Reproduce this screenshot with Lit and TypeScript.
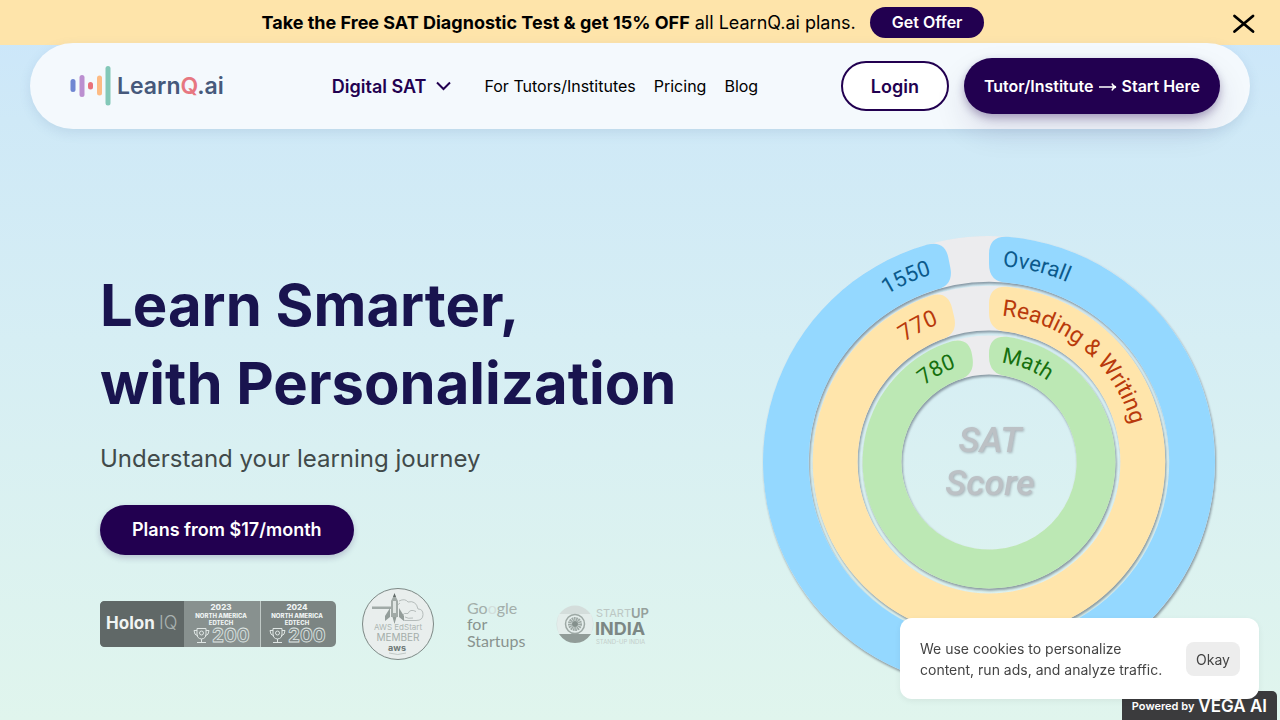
import { LitElement, html, css, svg } from "lit";
import { customElement } from "lit/decorators.js";

const CENTER = 230;

interface Ring {
  outer: number;
  inner: number;
  max: number;
  score: number;
  label: string;
  size: number;
  fill: string;
  ink: string;
  labelAt: number;
  scoreAt: number;
}

const RINGS: Ring[] = [
  { outer: 227, inner: 181, max: 1600, score: 1550, label: "Overall", size: 22, fill: "#94d8ff", ink: "#0b5a8c", labelAt: 4, scoreAt: -17 },
  { outer: 177, inner: 132, max: 800, score: 770, label: "Reading & Writing", size: 23, fill: "#ffe5ab", ink: "#b93a0b", labelAt: 5, scoreAt: -20 },
  { outer: 127, inner: 88, max: 800, score: 780, label: "Math", size: 22, fill: "#bce8b4", ink: "#16700f", labelAt: 7, scoreAt: -19 },
];

function point(radius: number, degrees: number): string {
  const a = (degrees * Math.PI) / 180;
  return `${(CENTER + radius * Math.sin(a)).toFixed(2)} ${(CENTER - radius * Math.cos(a)).toFixed(2)}`;
}

/** Ring segment from 0 degrees to `end`, clockwise, with rounded corners. */
function segment(outer: number, inner: number, end: number, corner = 18): string {
  const o = (corner / outer) * (180 / Math.PI);
  const i = (corner / inner) * (180 / Math.PI);
  return [
    `M${point(outer, o)}`,
    `A${outer} ${outer} 0 1 1 ${point(outer, end - o)}`,
    `Q${point(outer, end)} ${point(outer - corner, end)}`,
    `L${point(inner + corner, end)}`,
    `Q${point(inner, end)} ${point(inner, end - i)}`,
    `A${inner} ${inner} 0 1 0 ${point(inner, i)}`,
    `Q${point(inner, 0)} ${point(inner + corner, 0)}`,
    `L${point(outer - corner, 0)}`,
    `Q${point(outer, 0)} ${point(outer, o)}Z`,
  ].join("");
}

@customElement("score-rings")
export class ScoreRings extends LitElement {
  static styles = css`
    :host { display: block; }
    svg { display: block; width: 100%; height: auto; overflow: visible; }
    .shape { filter: drop-shadow(1px 2px 1px rgba(60, 70, 85, 0.5)); }
    .label { font-family: Roboto, sans-serif; }
    .center {
      font: italic 500 36px Roboto, sans-serif;
      fill: #bcc1c5;
      text-anchor: middle;
      filter: drop-shadow(1px 1px 1px rgba(120, 120, 130, 0.5));
    }
  `;

  render() {
    return html`
      <svg viewBox="3 3 454 454" role="img" aria-label="SAT score rings">
        <g class="shape">
          ${RINGS.map((r) => {
            const mid = (r.outer + r.inner) / 2;
            return svg`
              <circle cx=${CENTER} cy=${CENTER} r=${mid} fill="none" stroke="#ececee" stroke-width=${r.outer - r.inner}></circle>
              <path d=${segment(r.outer, r.inner, (r.score / r.max) * 360)} fill=${r.fill}></path>`;
          })}
        </g>
        ${RINGS.map((r, n) => {
          const base = (r.outer + r.inner) / 2 - 7;
          return svg`
            <path id="label-${n}" fill="none" d="M${point(base, r.labelAt)}A${base} ${base} 0 0 1 ${point(base, 170)}"></path>
            <path id="score-${n}" fill="none" d="M${point(base, -170)}A${base} ${base} 0 0 1 ${point(base, r.scoreAt)}"></path>
            <text class="label" font-size=${r.size} fill=${r.ink}><textPath href="#label-${n}">${r.label}</textPath></text>
            <text class="label" font-size=${r.size} fill=${r.ink} text-anchor="end"><textPath href="#score-${n}" startOffset="100%">${r.score}</textPath></text>`;
        })}
        <text class="center" x="231" y="220">SAT</text>
        <text class="center" x="231" y="263">Score</text>
      </svg>
    `;
  }
}

@customElement("award-logos")
export class AwardLogos extends LitElement {
  static styles = css`
    :host { display: flex; align-items: center; }
    svg { display: block; flex: none; }
    .aws { margin-left: 26px; }
    .google { margin-left: 32px; }
    .india { margin-left: 30px; }
    text { font-family: Inter, sans-serif; }
    .mid { text-anchor: middle; }
    .open { fill: none; stroke: #dfe6e4; stroke-width: 0.8; font-weight: 700; font-size: 19px; }
    .tiny { font-size: 6px; font-weight: 800; fill: #eff4f3; }
    .year { font-size: 8px; font-weight: 800; fill: #eff4f3; }
    .round { font-family: Lato, sans-serif; }
    .narrow { font-family: "Open Sans", sans-serif; }
  `;

  private award(x: number, year: string) {
    return svg`
      <g transform="translate(${x} 0)">
        <text class="year mid" x="37" y="9">${year}</text>
        <text class="tiny mid" x="37" y="17">NORTH AMERICA</text>
        <text class="tiny mid" x="37" y="24">EDTECH</text>
        <g fill="none" stroke="#dfe6e4" stroke-width="1">
          <path d="M13 27.500h9v5.500q0 4.500-4.500 5q-4.500-.5-4.500-5zM13 29.500h-3q0 4.500 4 5.500M22 29.500h3q0 4.500-4 5.500M17.500 38v3M13 41.500h9"></path>
          <circle cx="17.500" cy="32" r="2"></circle>
        </g>
        <text class="open" x="28" y="41">200</text>
      </g>`;
  }

  render() {
    return html`
      <svg width="236" height="46" viewBox="0 0 236 46" role="img" aria-label="Holon IQ North America EdTech 200">
        <rect width="236" height="46" rx="5" fill="#7c8583"></rect>
        <path d="M5 0H84V46H5Q0 46 0 41V5Q0 0 5 0Z" fill="#606867"></path>
        <rect x="84" width="76" height="46" fill="#88918f"></rect>
        <path d="M160.500 0V46" stroke="#c0c9c6"></path>
        <text x="6" y="28" font-size="17" font-weight="700" fill="#f0f4f3">Holon</text>
        <text x="59" y="28" font-size="18" font-weight="300" fill="#a9b1af">IQ</text>
        ${this.award(84, "2023")} ${this.award(160, "2024")}
      </svg>

      <svg class="aws" width="72" height="72" viewBox="0 0 72 72" role="img" aria-label="AWS EdStart Member">
        <circle cx="36" cy="36" r="35.500" fill="#e9eeed" stroke="#7d8885"></circle>
        <g fill="none" stroke="#a7afad" stroke-width="0.800">
          <path d="M37 13q6-3 9 1q8-2 10 7q5 0 5 5.500q0 6-7 6H43q-4-1-3-5q2-3 6-2q2-5 8-2"></path>
          <path d="M38 15q-4 2-4 6M43 29q3 2 8 1"></path>
        </g>
        <path d="M10 18.500H29V21H10zM29 13l3.500-7l3.500 7V29H29z" fill="#a1aaa7"></path>
        <path d="M31 13h3v12h-3z" fill="#dfe5e3"></path>
        <path d="M28 20l-5 8v5l5-4zM37 20l5 8v5l-5-4zM30.500 29h4l-2 7z" fill="#939d9a"></path>
        <path d="M31 9l1.500-4l1.500 4z" fill="#626b69"></path>
        <text class="mid" x="36" y="42" font-size="8" fill="#adb6b3">AWS EdStart</text>
        <text class="mid" x="36" y="53" font-size="10" fill="#a4adaa">MEMBER</text>
        <text class="mid" x="35" y="63" font-size="9" font-weight="700" fill="#6f7977">aws</text>
        <path d="M27 65q9 3 17 0" fill="none" stroke="#b5bdba" stroke-width="0.800"></path>
      </svg>

      <svg class="google" width="60" height="56" viewBox="0 0 60 56" role="img" aria-label="Google for Startups">
        <text class="round" x="1" y="18" font-size="16" fill="#a3aeaa">Go<tspan fill="#d3dedb">o</tspan>gle</text>
        <text class="round" x="1" y="34" font-size="16" fill="#89938f">for</text>
        <text class="round" x="1" y="51" font-size="16" fill="#89938f">Startups</text>
      </svg>

      <svg class="india" width="94" height="44" viewBox="0 0 94 44" role="img" aria-label="Startup India">
        <circle cx="19" cy="22" r="18.500" fill="#d4dddb"></circle>
        <path d="M3 12H35Q39 22 35 32H3Q-1 22 3 12Z" fill="#e4edeb"></path>
        <path d="M3 32H35Q29 41 19 41T3 32Z" fill="#919c98"></path>
        <g fill="none" stroke="#9da8a4">
          <circle cx="19" cy="22" r="9.500" stroke-width="1.500"></circle>
          <circle cx="19" cy="22" r="5" stroke-width="4" stroke-dasharray="1.500 0.500"></circle>
        </g>
        <circle cx="19" cy="22" r="3" fill="#84908c"></circle>
        <text x="40" y="15" font-size="11" fill="#bcc7c4">START</text>
        <text x="75" y="16" font-size="13" font-weight="600" fill="#95a09c">UP</text>
        <text x="39" y="33" font-size="18" font-weight="700" fill="#7c8784">INDIA</text>
        <text x="40" y="42" font-size="6" fill="#c3ceca">STAND-UP INDIA</text>
      </svg>
    `;
  }
}

@customElement("app-root")
export class AppRoot extends LitElement {
  static styles = css`
    :host {
      display: block;
      min-height: 100vh;
      overflow: hidden;
      box-sizing: border-box;
      background: linear-gradient(180deg, #cbe6fb 0, #cfe9f7 120px, #d6eef4 340px, #e0f5ed 100vh);
      font-family: Inter, sans-serif;
      color: #000;
    }
    button { font: inherit; cursor: pointer; border: 0; padding: 0; }
    a { color: inherit; text-decoration: none; }

    .banner {
      display: flex;
      align-items: center;
      background: #fee4aa;
      height: 45px;
      padding: 0 24px;
    }
    .banner-body {
      flex: 1;
      display: flex;
      align-items: center;
      justify-content: center;
      gap: 14px;
      padding-right: 10px;
    }
    .banner p { margin: 0; font-size: 18px; line-height: 24px; white-space: nowrap; }
    .offer {
      background: #220050;
      color: #fff;
      font-size: 16px;
      font-weight: 600;
      line-height: 31px;
      padding: 0 22px;
      border-radius: 16px;
    }
    .close { background: none; width: 24px; height: 24px; }
    .close svg, .menu svg { display: block; }

    .bar {
      position: relative;
      display: flex;
      align-items: center;
      height: 86px;
      margin: -2px 30px 0;
      padding: 0 30px 0 40px;
      box-sizing: border-box;
      border-radius: 43px;
      background: #f4f9fd;
      box-shadow: 0 4px 12px rgba(80, 110, 160, 0.14);
    }
    .logo {
      display: flex;
      align-items: center;
      gap: 5px;
      color: #46597b;
      font-size: 23px;
      font-weight: 600;
    }
    .logo .q { color: #e77781; }
    nav {
      display: flex;
      align-items: center;
      margin-left: 108px;
      gap: 18px;
      font-size: 16px;
      white-space: nowrap;
    }
    .menu {
      display: flex;
      align-items: center;
      gap: 10px;
      margin-right: 15px;
      background: none;
      color: #220050;
      font-size: 18px;
      font-weight: 600;
    }
    .actions { display: flex; align-items: center; gap: 15px; margin-left: auto; white-space: nowrap; }
    .login {
      height: 50px;
      padding: 0 28px;
      border: 2px solid #220050;
      border-radius: 25px;
      background: #fff;
      color: #220050;
      font-size: 18px;
      font-weight: 600;
    }
    .start {
      display: flex;
      align-items: center;
      gap: 5px;
      height: 56px;
      padding: 0 20px;
      border-radius: 28px;
      background: #220050;
      color: #fff;
      font-size: 16px;
      font-weight: 600;
      box-shadow: 0 4px 8px rgba(34, 0, 80, 0.3), 0 16px 32px rgba(34, 0, 80, 0.12);
    }

    .hero {
      display: flex;
      align-items: center;
      justify-content: space-between;
      padding: 107px 65px 32px 100px;
    }
    .intro { padding-top: 2px; }
    h1 {
      margin: 0;
      color: #19144f;
      font-size: 58px;
      line-height: 78px;
      font-weight: 700;
      white-space: nowrap;
    }
    .lead { margin: 19px 0 0; color: #414a4a; font-size: 24px; line-height: 36px; }
    .plans {
      display: inline-block;
      margin-top: 28px;
      height: 50px;
      padding: 0 32px;
      border-radius: 25px;
      background: #220050;
      color: #fff;
      font-size: 18px;
      font-weight: 600;
      line-height: 50px;
      box-shadow: 0 3px 6px rgba(34, 0, 80, 0.2);
    }
    award-logos { margin-top: 33px; }
    score-rings { flex: none; width: 452px; }

    .vega {
      position: fixed;
      right: 3px;
      bottom: 0;
      display: flex;
      align-items: center;
      gap: 4px;
      height: 29px;
      padding: 0 10px;
      border-radius: 5px 5px 0 0;
      background: #3b3b3d;
      color: #fff;
      font-size: 11px;
      font-weight: 600;
    }
    .vega strong { font-size: 17px; font-weight: 600; }
    .cookies {
      position: fixed;
      right: 21px;
      bottom: 21px;
      display: flex;
      align-items: center;
      justify-content: space-between;
      width: 359px;
      padding: 20px 19px 19px 20px;
      box-sizing: border-box;
      border-radius: 12px;
      background: #fff;
      box-shadow: 0 2px 6px rgba(0, 0, 0, 0.06);
      color: #444;
      font-size: 14px;
      line-height: 21px;
    }
    .cookies p { margin: 0; white-space: nowrap; }
    .okay { height: 34px; padding: 0 10px; border-radius: 8px; background: #ededed; color: #444; }
  `;

  render() {
    return html`
      <div class="banner">
        <div class="banner-body">
          <p><b>Take the Free SAT Diagnostic Test &amp; get 15% OFF</b> all LearnQ.ai plans.</p>
          <button class="offer">Get Offer</button>
        </div>
        <button class="close" aria-label="Close">
          <svg width="24" height="24" viewBox="0 0 24 24" fill="none" stroke="#000" stroke-width="2.800" stroke-linecap="round">
            <path d="M2.500 5L21 20.500M21 5L2.500 20.500"></path>
          </svg>
        </button>
      </div>

      <header class="bar">
        <a class="logo" href="#" aria-label="LearnQ.ai">
          <svg width="42" height="42" viewBox="0 0 42 42" stroke-width="5" stroke-linecap="round">
            <path d="M3 16.500V24.500" stroke="#6f86d2"></path>
            <path d="M12 12.500V29.500" stroke="#bb8fd0"></path>
            <path d="M20.500 19.500V22" stroke="#e8717b"></path>
            <path d="M29.500 13V28" stroke="#fdbb84"></path>
            <path d="M38 3.500V38" stroke="#83c8b8"></path>
          </svg>
          <span>Learn<span class="q">Q</span>.ai</span>
        </a>
        <nav>
          <button class="menu">
            Digital SAT
            <svg width="15" height="10" viewBox="0 0 15 10" fill="none" stroke="#220050" stroke-width="2">
              <path d="M1 1.500L7.500 8L14 1.500"></path>
            </svg>
          </button>
          <a href="#">For Tutors/Institutes</a>
          <a href="#">Pricing</a>
          <a href="#">Blog</a>
        </nav>
        <div class="actions">
          <button class="login">Login</button>
          <button class="start">
            Tutor/Institute
            <svg width="18" height="10" viewBox="0 0 18 10" fill="none" stroke="#fff" stroke-width="1.500" aria-label="to">
              <path d="M0 6H16.500M13 2.500Q14 5.500 17 6Q14 6.500 13 9.500"></path>
            </svg>
            Start Here
          </button>
        </div>
      </header>

      <main class="hero">
        <section class="intro">
          <h1>Learn Smarter,<br />with Personalization</h1>
          <p class="lead">Understand your learning journey</p>
          <a class="plans" href="#">Plans from $17/month</a>
          <award-logos></award-logos>
        </section>
        <score-rings></score-rings>
      </main>

      <a class="vega" href="#">Powered by <strong>VEGA AI</strong></a>
      <div class="cookies" role="dialog" aria-label="Cookies">
        <p>We use cookies to personalize<br />content, run ads, and analyze traffic.</p>
        <button class="okay">Okay</button>
      </div>
    `;
  }
}
